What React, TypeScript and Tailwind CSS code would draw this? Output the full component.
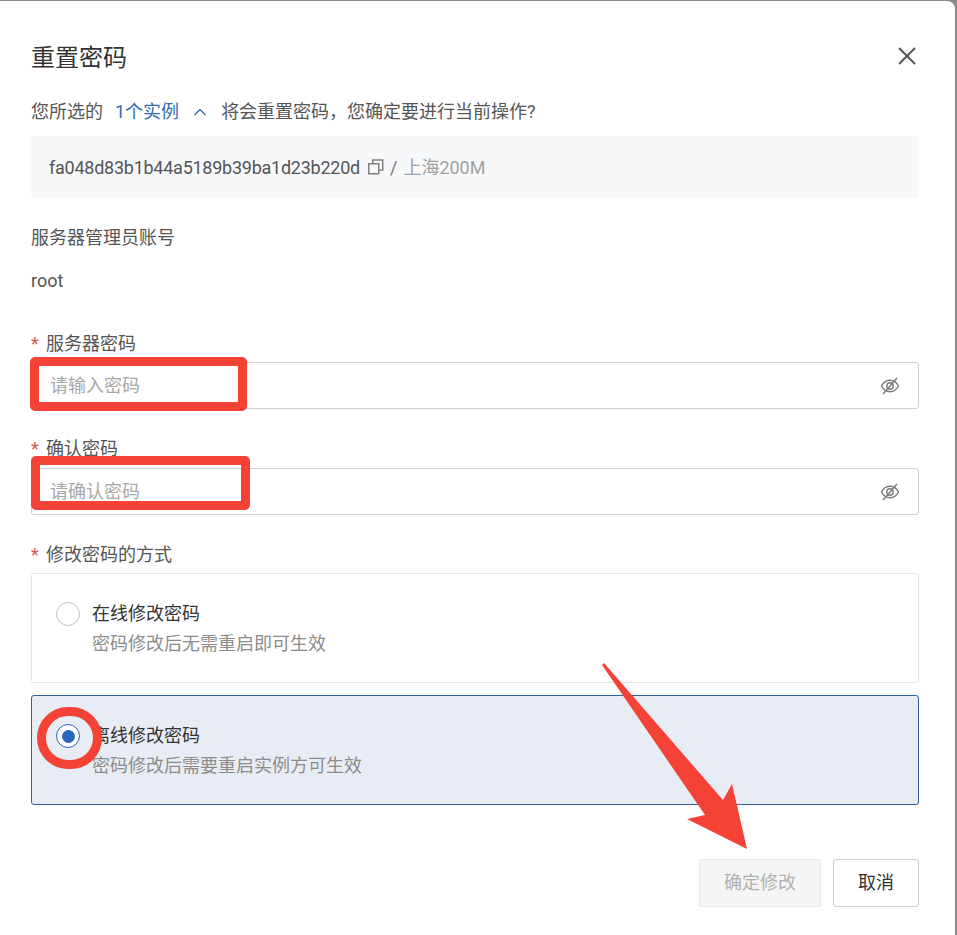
import React from 'react';
import { ChevronUp, X } from 'lucide-react';

const FONT = "font-['Roboto','Noto_Sans_CJK_SC',sans-serif]";

const EyeSlash: React.FC = () => (
  <svg width="20" height="20" viewBox="0 0 20 20" fill="none" stroke="#777" strokeWidth="1.4">
    <path d="M1.500 10C3.500 6.200 6.500 4.300 10 4.300s6.500 1.900 8.500 5.700c-2 3.800-5 5.700-8.500 5.700S3.500 13.800 1.500 10z" />
    <circle cx="10" cy="10" r="3.200" />
    <path d="M17 2 3 18" />
  </svg>
);

const CopyIcon: React.FC = () => (
  <svg width="16" height="16" viewBox="0 0 16 16" fill="none" stroke="#808080" strokeWidth="1.5">
    <rect x="0.750" y="4.750" width="10" height="10" />
    <path d="M4.750 4.500V1h10v10h-3.500" />
  </svg>
);

const Label: React.FC<{ text: string; required?: boolean; className?: string }> = ({ text, required, className }) => (
  <div className={`flex items-center h-6 pt-[2px] text-lg text-[#555] ${className ?? ''}`}>
    {required && <span className="w-[15px] text-[#e0574a]">*</span>}
    <span>{text}</span>
  </div>
);

const PasswordInput: React.FC<{ placeholder: string; className?: string }> = ({ placeholder, className }) => (
  <div className={`flex items-center justify-between h-[47px] pl-[18px] pr-[18px] border border-[#cfcfcf] rounded-[3px] bg-white ${className ?? ''}`}>
    <span className="text-lg text-[#a8a8a8]">{placeholder}</span>
    <EyeSlash />
  </div>
);

const RadioCard: React.FC<{ title: string; desc: string; checked?: boolean; className?: string }> = ({ title, desc, checked, className }) => (
  <div
    className={`flex h-[110px] pl-6 pt-[27px] gap-3 rounded-[3px] border ${
      checked ? 'bg-[#e8ecf4] border-[#2f6299]' : 'bg-white border-[#e4e4e4]'
    } ${className ?? ''}`}
  >
    <div
      className={`flex items-center justify-center w-6 h-6 mt-[1px] rounded-full border bg-white ${
        checked ? 'border-[#2a65bd]' : 'border-[#c4c4c4]'
      }`}
    >
      {checked && <div className="w-[13px] h-[13px] rounded-full bg-[#2a65bd]" />}
    </div>
    <div className="pt-px">
      <div className="h-6 leading-6 text-lg text-[#333]">{title}</div>
      <div className="h-6 mt-[6px] leading-6 text-lg text-[#8c8c8c]">{desc}</div>
    </div>
  </div>
);

// red marks drawn over the screenshot
const Annotations: React.FC = () => (
  <>
    <div className="absolute left-[30px] top-[357px] w-[217px] h-[54px] border-[9px] border-[#f44336] rounded-[5px]" />
    <div className="absolute left-[31px] top-[456px] w-[219px] h-[54px] border-[9px] border-[#f44336] rounded-[5px]" />
    <div className="absolute left-[37px] top-[707px] w-[65px] h-[62px] border-[9px] border-[#f44336] rounded-full" />
    <svg className="absolute left-[600px] top-[660px]" width="150" height="192" viewBox="0 0 150 192">
      <polygon points="2,5 4,3 123,140 132,124 147,189 87,159 105,155" fill="#f44336" />
    </svg>
  </>
);

export default function App() {
  return (
    <div className={`relative w-[957px] h-[935px] overflow-hidden bg-[#8a8a8a] pt-px pr-[2px] ${FONT}`}>
      <div className="h-full bg-white rounded-tr-[8px] px-[31px] pr-9">
        <div className="flex items-center justify-between pt-10 h-[74px]">
          <h2 className="text-2xl leading-[36px] text-[#333]">重置密码</h2>
          <X size={30} strokeWidth={1.5} className="text-[#555] mr-[-3px] -mt-1" />
        </div>

        <div className="flex items-center h-6 mt-6 pt-[2px] text-lg text-[#555]">
          <span>您所选的</span>
          <span className="ml-3 text-[#2f6cb3]">1个实例</span>
          <ChevronUp size={20} strokeWidth={1.6} className="ml-[11px] text-[#2f6cb3]" />
          <span className="ml-[11px]">将会重置密码，您确定要进行当前操作?</span>
        </div>

        <div className="flex items-center h-[62px] mt-[13px] pl-[18px] pt-[2px] rounded-[3px] bg-[#f7f8fa] text-lg">
          <span className="text-[#555] tracking-[-0.25px]">fa048d83b1b44a5189b39ba1d23b220d</span>
          <span className="ml-2 -mt-[2px]"><CopyIcon /></span>
          <span className="ml-[6px] text-[#777]">/</span>
          <span className="ml-[6px] text-[#a0a0a0]">上海200M</span>
        </div>

        <Label text="服务器管理员账号" className="mt-[27px]" />
        <div className="h-6 mt-5 leading-6 text-lg text-[#555]">root</div>

        <Label text="服务器密码" required className="mt-[38px]" />
        <PasswordInput placeholder="请输入密码" className="mt-[7px]" />

        <Label text="确认密码" required className="mt-[27px]" />
        <PasswordInput placeholder="请确认密码" className="mt-2" />

        <Label text="修改密码的方式" required className="mt-[27px]" />
        <RadioCard title="在线修改密码" desc="密码修改后无需重启即可生效" className="mt-[7px]" />
        <RadioCard title="离线修改密码" desc="密码修改后需要重启实例方可生效" checked className="mt-3" />

        <div className="flex justify-end gap-3 mt-[54px]">
          <button className="w-[122px] h-12 rounded-[3px] border border-[#e6e6e6] bg-[#f5f5f5] text-lg text-[#b0b0b0]">确定修改</button>
          <button className="w-[86px] h-12 rounded-[3px] border border-[#cfcfcf] bg-white text-lg text-[#333]">取消</button>
        </div>
      </div>
      <Annotations />
    </div>
  );
}
